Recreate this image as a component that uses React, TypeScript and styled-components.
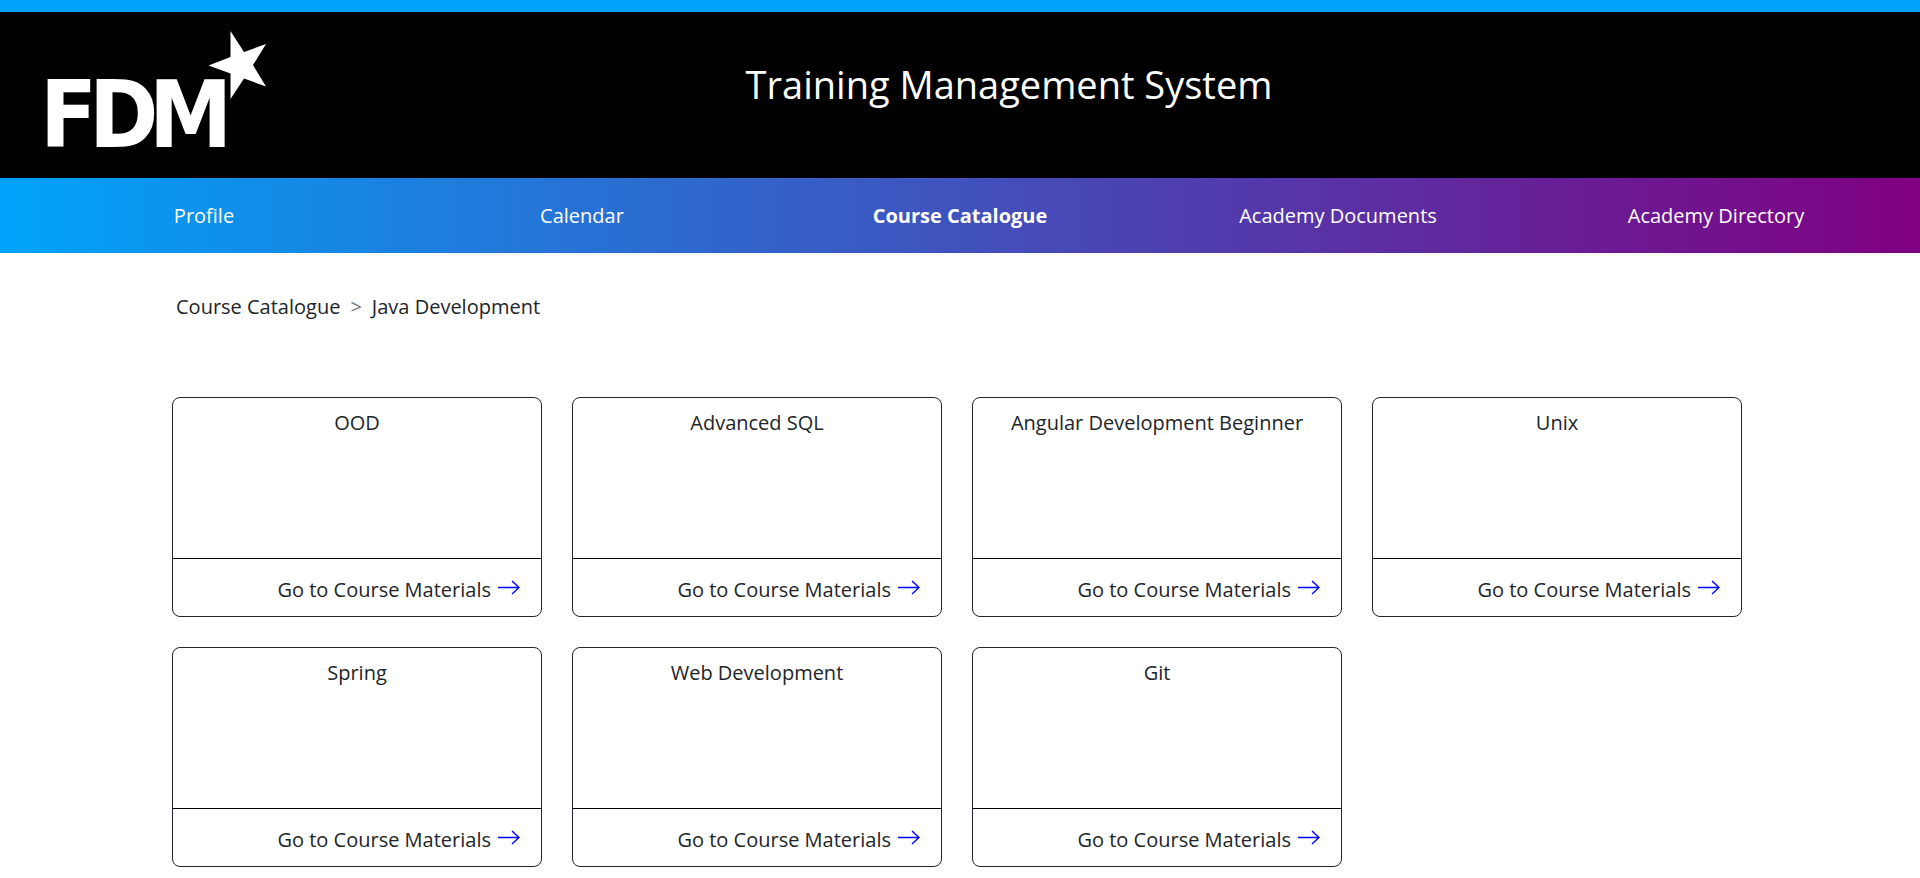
import React from "react";
import styled, { createGlobalStyle } from "styled-components";

const GlobalStyle = createGlobalStyle`
  *, *::before, *::after { box-sizing: border-box; }
  body {
    margin: 0;
    background: #fff;
    color: #212529;
    font-family: "Open Sans", sans-serif;
    font-size: 20px;
    line-height: 30px;
  }
  a { color: inherit; text-decoration: none; }
  ul, ol { list-style: none; margin: 0; padding: 0; }
`;

const Header = styled.header`
  display: flex;
  align-items: flex-start;
  min-height: 178px;
  padding: 18px 168px 0 48px;
  background: #000;
  color: #fff;
  border-top: 12px solid #00a3f9;
`;

const LogoLink = styled.a`
  flex: none;
  display: block;
`;

const LogoSvg = styled.svg`
  display: block;
  overflow: visible;
  fill: #fff;
  font-family: "DejaVu Sans Condensed", "DejaVu Sans", sans-serif;
  font-weight: 700;
  font-size: 93px;
`;

const Title = styled.h1`
  flex: 1;
  margin: 0;
  padding-top: 24px;
  text-align: center;
  font-size: 38px;
  font-weight: 400;
  line-height: 60px;
`;

const Nav = styled.nav`
  padding: 0 15px;
  background: linear-gradient(to right, #00a3f9, #800080);
  color: #fff;
`;

const NavList = styled.ul`
  display: grid;
  grid-template-columns: repeat(5, 1fr);
  align-items: center;
  min-height: 75px;
  text-align: center;
`;

const NavLink = styled.a<{ $active?: boolean }>`
  font-weight: ${(p) => (p.$active ? 700 : 400)};
`;

const Main = styled.main`
  padding: 39px 178px 10px 172px;
`;

const Breadcrumb = styled.ol`
  display: flex;
  gap: 10px;
  padding: 0 4px;
  margin-bottom: 75px;
`;

const Separator = styled.li`
  color: #6c757d;
`;

const CardGrid = styled.section`
  display: grid;
  grid-template-columns: repeat(4, 1fr);
  gap: 30px;
`;

const Card = styled.article`
  display: flex;
  flex-direction: column;
  min-height: 220px;
  border: 1px solid #212529;
  border-radius: 8px;
`;

const CardTitle = styled.h2`
  flex: 1;
  margin: 0;
  padding: 10px 20px;
  text-align: center;
  font-size: 20px;
  font-weight: 400;
`;

const CardFooter = styled.a`
  display: flex;
  justify-content: flex-end;
  gap: 6px;
  padding: 16px 20px 11px;
  border-top: 1px solid #000;
`;

const ArrowSvg = styled.svg`
  fill: none;
  stroke: #00f;
  stroke-width: 1.4px;
`;

const Logo = () => (
  <LogoSvg width="218" height="117" viewBox="48 30 218 117" role="img" aria-label="FDM">
    <text x="40 89 149" y="147">FDM</text>
    <path d="M230.500 31 L244 52 L266 44 L253 65 L266 86.500 L244 78.500 L230.500 99 L230.500 73.500 L208.500 65.500 L230.500 57 Z" />
  </LogoSvg>
);

const Arrow = () => (
  <ArrowSvg width="24" height="24" viewBox="0 0 24 24" aria-hidden="true">
    <path d="M1 12.500 H22 M15 6 L22 12.500 L15 19" />
  </ArrowSvg>
);

const navItems = ["Profile", "Calendar", "Course Catalogue", "Academy Documents", "Academy Directory"];
const courses = ["OOD", "Advanced SQL", "Angular Development Beginner", "Unix", "Spring", "Web Development", "Git"];

export default function App() {
  return (
    <>
      <GlobalStyle />
      <Header>
        <LogoLink href="#home"><Logo /></LogoLink>
        <Title>Training Management System</Title>
      </Header>
      <Nav>
        <NavList>
          {navItems.map((item) => (
            <li key={item}>
              <NavLink href="#" $active={item === "Course Catalogue"}>{item}</NavLink>
            </li>
          ))}
        </NavList>
      </Nav>
      <Main>
        <Breadcrumb aria-label="Breadcrumb">
          <li><a href="#catalogue">Course Catalogue</a></li>
          <Separator aria-hidden="true">&gt;</Separator>
          <li>Java Development</li>
        </Breadcrumb>
        <CardGrid>
          {courses.map((course) => (
            <Card key={course}>
              <CardTitle>{course}</CardTitle>
              <CardFooter href="#materials">
                Go to Course Materials
                <Arrow />
              </CardFooter>
            </Card>
          ))}
        </CardGrid>
      </Main>
    </>
  );
}
